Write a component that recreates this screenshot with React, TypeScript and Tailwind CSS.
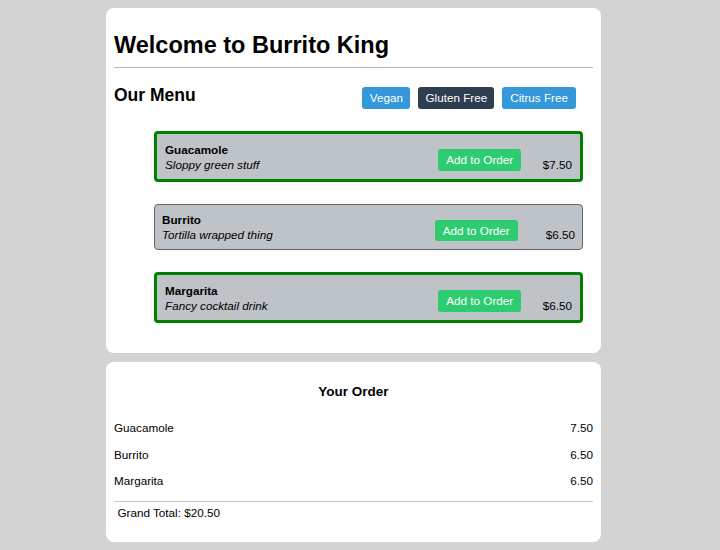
import { useState } from 'react';

type MenuItem = {
  name: string;
  description: string;
  price: number;
  selected: boolean;
};

const MENU: MenuItem[] = [
  { name: 'Guacamole', description: 'Sloppy green stuff', price: 7.5, selected: true },
  { name: 'Burrito', description: 'Tortilla wrapped thing', price: 6.5, selected: false },
  { name: 'Margarita', description: 'Fancy cocktail drink', price: 6.5, selected: true },
];

const FILTERS = [
  { label: 'Vegan', active: false, pad: 'px-[7.5px]' },
  { label: 'Gluten Free', active: true, pad: 'px-[7px]' },
  { label: 'Citrus Free', active: false, pad: 'px-[8px]' },
];

function MenuRow({ item, onAdd }: { item: MenuItem; onAdd: () => void }) {
  const box = item.selected
    ? 'border-[3px] border-[#008000] rounded-[4px] py-[7.5px] pl-[8px] pr-[8px]'
    : 'border border-[#666666] rounded-[4px] py-[7px] pl-[7px] pr-[7px]';

  return (
    <li className={`flex items-end justify-between bg-[#bdc3c7] ${box}`}>
      <div className="leading-[15px]">
        <div className="font-bold">{item.name}</div>
        <div className="italic">{item.description}</div>
      </div>
      <div className={`flex items-end ${item.selected ? 'gap-[21.5px]' : 'gap-[28px]'}`}>
        <button
          onClick={onAdd}
          className="h-[21.4px] mb-[1px] px-[8px] bg-[#2ecc71] text-white rounded-[3px] leading-[21px]"
        >
          Add to Order
        </button>
        <span className="leading-[15px]">${item.price.toFixed(2)}</span>
      </div>
    </li>
  );
}

export default function App() {
  const [order, setOrder] = useState<MenuItem[]>(MENU);

  const total = order.reduce((sum, item) => sum + item.price, 0);

  return (
    <div className="min-h-[550px] bg-[#d3d3d3] pt-[7.5px] text-[11.7px] text-black font-['Liberation_Sans',Arial,sans-serif]">
      <div className="ml-[106px] w-[495px] flex flex-col gap-[8.5px]">
        {/* Menu */}
        <div className="bg-white rounded-[8px] px-[8px] pt-[24px] pb-[30px]">
          <h1 className="text-[23.5px] leading-[27px] font-bold">Welcome to Burrito King</h1>
          <div className="mt-[8px] h-px bg-[#b5b5b5]" />

          <div className="mt-[17px] flex items-start justify-between">
            <h2 className="text-[17.5px] leading-[20px] font-bold">Our Menu</h2>
            <div className="mt-[2px] mr-[17px] flex gap-[8px]">
              {FILTERS.map(f => (
                <button
                  key={f.label}
                  className={`h-[22px] ${f.pad} rounded-[3px] text-white leading-[22px] ${
                    f.active ? 'bg-[#2c3e50]' : 'bg-[#3498db]'
                  }`}
                >
                  {f.label}
                </button>
              ))}
            </div>
          </div>

          <ul className="mt-[22.5px] ml-[40px] w-[429px] flex flex-col gap-[22px]">
            {MENU.map(item => (
              <MenuRow key={item.name} item={item} onAdd={() => setOrder(prev => [...prev, item])} />
            ))}
          </ul>
        </div>

        {/* Order */}
        <div className="bg-white rounded-[8px] px-[8px] pt-[22px] pb-[22px]">
          <h3 className="text-center text-[13.5px] leading-[16px] font-bold">Your Order</h3>
          <div className="mt-[15.3px]">
            {order.map((item, i) => (
              <div key={i} className="flex justify-between leading-[26.7px]">
                <span>{item.name}</span>
                <span>{item.price.toFixed(2)}</span>
              </div>
            ))}
          </div>
          <div className="mt-[6.3px] h-px bg-[#c8c8c8]" />
          <div className="mt-[2.4px] pl-[3.5px] leading-[15px]">Grand Total: ${total.toFixed(2)}</div>
        </div>
      </div>
    </div>
  );
}
